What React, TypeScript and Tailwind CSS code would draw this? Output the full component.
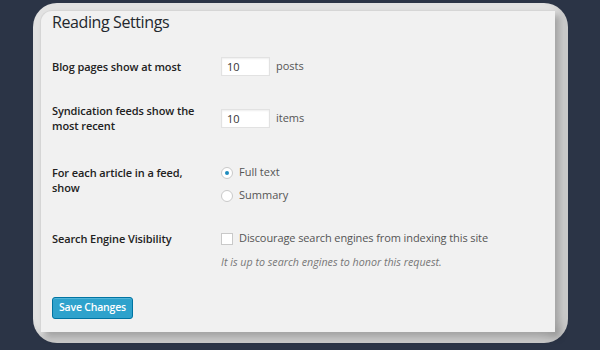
export default function App() {
  const font = { fontFamily: '"Open Sans", "Noto Sans", sans-serif' };

  return (
    <div className="w-[600px] h-[350px] bg-[#2b3446] overflow-hidden" style={font}>
      {/* Rounded frame around the settings panel */}
      <div className="ml-[33px] mt-[3px] w-[535px] h-[340px] rounded-[24px] bg-[#e2e2e2] pt-[7px] pl-[7px] pr-[13px] pb-[11px] shadow-[inset_-6px_-6px_8px_rgba(0,0,0,0.12)]">
        <div className="h-full rounded-tl-[12px] bg-[#f1f1f1] border-t border-l border-[#d6d6d6] shadow-[5px_5px_7px_rgba(0,0,0,0.28)] pl-[11px] text-[#444]">
          <h1 className="text-[16px] leading-[22px] tracking-[-0.4px] text-[#23282d] font-normal">Reading Settings</h1>

          <div className="mt-[24px] flex items-center">
            <div className="w-[169px] pr-[19px] text-[11px] leading-[15px] tracking-[-0.1px] font-semibold text-[#222]">Blog pages show at most</div>
            <div className="flex items-center gap-[6px]">
              <div className="w-[49px] h-[19px] bg-white border border-[#e2e2e2] shadow-[inset_0_1px_2px_rgba(0,0,0,0.07)] text-[11px] leading-[17px] pl-[5px] text-[#333]">10</div>
              <span className="text-[11px] text-[#555]">posts</span>
            </div>
          </div>

          <div className="mt-[27px] flex items-center">
            <div className="w-[169px] pr-[19px] text-[11px] leading-[15px] tracking-[-0.1px] font-semibold text-[#222]">Syndication feeds show the most recent</div>
            <div className="flex items-center gap-[6px]">
              <div className="w-[49px] h-[19px] bg-white border border-[#e2e2e2] shadow-[inset_0_1px_2px_rgba(0,0,0,0.07)] text-[11px] leading-[17px] pl-[5px] text-[#333]">10</div>
              <span className="text-[11px] text-[#555]">items</span>
            </div>
          </div>

          <div className="mt-[31px] flex items-start">
            <div className="w-[169px] pr-[19px] text-[11px] leading-[15px] tracking-[-0.1px] font-semibold text-[#222] pt-[1px]">For each article in a feed, show</div>
            <div className="flex flex-col gap-[6px] text-[11px] text-[#555]">
              <div className="flex items-center gap-[6px] h-[17px]">
                <span className="w-[12px] h-[12px] rounded-full bg-white border border-[#c9c9c9] flex items-center justify-center">
                  <span className="w-[4px] h-[4px] rounded-full bg-[#1e8cbe]" />
                </span>
                Full text
              </div>
              <div className="flex items-center gap-[6px] h-[17px]">
                <span className="w-[12px] h-[12px] rounded-full bg-white border border-[#c9c9c9]" />
                Summary
              </div>
            </div>
          </div>

          <div className="mt-[26px] flex items-start">
            <div className="w-[169px] pr-[19px] text-[11px] leading-[17px] tracking-[-0.1px] font-semibold text-[#222]">Search Engine Visibility</div>
            <div className="flex flex-col">
              <div className="flex items-center gap-[6px] h-[17px] text-[11px] tracking-[-0.1px] text-[#555]">
                <span className="w-[12px] h-[12px] bg-white border border-[#c9c9c9]" />
                Discourage search engines from indexing this site
              </div>
              <div className="mt-[8px] text-[10.7px] leading-[15px] italic text-[#777]">It is up to search engines to honor this request.</div>
            </div>
          </div>

          <button className="mt-[27px] w-[81px] h-[22px] rounded-[3px] bg-[#2ea2cc] border border-[#0074a2] shadow-[inset_0_1px_0_rgba(120,200,230,0.5)] text-white text-[10.5px] font-semibold tracking-[-0.2px]">
            Save Changes
          </button>
        </div>
      </div>
    </div>
  );
}
